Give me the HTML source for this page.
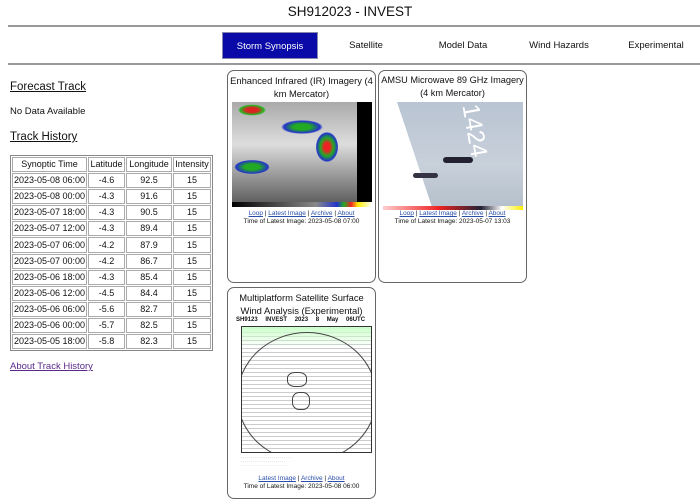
<!DOCTYPE html>
<html><head><style>
*{margin:0;padding:0;box-sizing:border-box}
body{width:700px;height:504px;background:#fff;font-family:"Liberation Sans",sans-serif;color:#111;position:relative;overflow:hidden}
.a{position:absolute}
.title{left:0;width:700px;top:4px;text-align:center;font-size:13.5px}
.hr{left:8px;width:692px;height:2px;background:#999}
.nav{top:32px;height:27px;font-size:9.5px;text-align:center;line-height:27px}
h2{position:absolute;font-size:11.5px;font-weight:normal;text-decoration:underline;left:10px}
table{position:absolute;left:10px;top:155px;width:201px;table-layout:fixed;border-collapse:separate;border-spacing:1px;border:1px solid #888;font-size:9px;white-space:nowrap}
td{border:1px solid #aaa;height:15.1px;text-align:center;padding:0;line-height:13px;overflow:hidden}
.card{position:absolute;border:1px solid #666;border-radius:7px;background:#fff}
.ct{font-size:9.4px;text-align:center;line-height:13px;position:absolute;left:0;right:0}
.lk{font-size:6.5px;text-align:center;position:absolute;left:0;right:0;line-height:9px}
.lk span{color:#2a4fa8;text-decoration:underline}
</style></head><body>
<div class="a title">SH912023 - INVEST</div>
<div class="a hr" style="top:25px"></div>
<div class="a nav" style="left:222px;width:96px;background:#0a0aa8;color:#fff;border:1px solid #88a">Storm Synopsis</div>
<div class="a nav" style="left:330px;width:72px">Satellite</div>
<div class="a nav" style="left:425px;width:76px">Model Data</div>
<div class="a nav" style="left:520px;width:78px">Wind Hazards</div>
<div class="a nav" style="left:618px;width:76px">Experimental</div>
<div class="a hr" style="top:63px"></div>

<h2 style="top:81px">Forecast Track</h2>
<div class="a" style="left:10px;top:106px;font-size:9.5px">No Data Available</div>
<h2 style="top:131px">Track History</h2>
<table>
<colgroup><col style="width:75px"><col style="width:37px"><col style="width:46px"><col style="width:38px"></colgroup>
<tr><td>Synoptic Time</td><td>Latitude</td><td>Longitude</td><td>Intensity</td></tr>
<tr><td>2023-05-08 06:00</td><td>-4.6</td><td>92.5</td><td>15</td></tr>
<tr><td>2023-05-08 00:00</td><td>-4.3</td><td>91.6</td><td>15</td></tr>
<tr><td>2023-05-07 18:00</td><td>-4.3</td><td>90.5</td><td>15</td></tr>
<tr><td>2023-05-07 12:00</td><td>-4.3</td><td>89.4</td><td>15</td></tr>
<tr><td>2023-05-07 06:00</td><td>-4.2</td><td>87.9</td><td>15</td></tr>
<tr><td>2023-05-07 00:00</td><td>-4.2</td><td>86.7</td><td>15</td></tr>
<tr><td>2023-05-06 18:00</td><td>-4.3</td><td>85.4</td><td>15</td></tr>
<tr><td>2023-05-06 12:00</td><td>-4.5</td><td>84.4</td><td>15</td></tr>
<tr><td>2023-05-06 06:00</td><td>-5.6</td><td>82.7</td><td>15</td></tr>
<tr><td>2023-05-06 00:00</td><td>-5.7</td><td>82.5</td><td>15</td></tr>
<tr><td>2023-05-05 18:00</td><td>-5.8</td><td>82.3</td><td>15</td></tr>
</table>
<div class="a" style="left:10px;top:361px;font-size:9.5px;color:#5a2a8a;text-decoration:underline">About Track History</div>

<div class="card" style="left:227px;top:70px;width:149px;height:213px">
<div class="ct" style="top:3px">Enhanced Infrared (IR) Imagery (4 km Mercator)</div>
<div class="a" style="left:4px;top:31px;width:140px;height:105px;background:radial-gradient(ellipse 15px 20px at 95px 45px,#e22 20%,#2a2 45%,#23c 70%,transparent 75%),radial-gradient(ellipse 25px 10px at 20px 65px,#2a2 30%,#23c 65%,transparent 70%),radial-gradient(ellipse 20px 8px at 20px 8px,#d22 30%,#2b2 60%,transparent 70%),radial-gradient(ellipse 30px 10px at 70px 25px,#2a2 30%,#23c 60%,transparent 70%),linear-gradient(180deg,#aaa,#ddd 40%,#999 70%,#555);"></div>
<div class="a" style="left:129px;top:31px;width:15px;height:100px;background:#000"></div>
<div class="a" style="left:4px;top:131px;width:140px;height:5px;background:linear-gradient(90deg,#000,#888 60%,#23c 75%,#2a2 80%,#e22 85%,#fe0 90%,#fff)"></div>
<div class="lk" style="top:138px"><span>Loop</span> | <span>Latest Image</span> | <span>Archive</span> | <span>About</span></div>
<div class="lk" style="top:146px">Time of Latest Image: 2023-05-08 07:00</div>
</div>

<div class="card" style="left:378px;top:70px;width:149px;height:213px">
<div class="ct" style="top:3px;white-space:nowrap;font-size:9.2px">AMSU Microwave 89 GHz Imagery<br>(4 km Mercator)</div>
<div class="a" style="left:4px;top:31px;width:140px;height:105px;background:#fff;overflow:hidden">
<div class="a" style="left:14px;top:0;width:140px;height:105px;background:linear-gradient(180deg,#b9c4d2,#c8d0da 60%,#b5c0cc);clip-path:polygon(0 0,100% 0,100% 100%,25% 100%)"></div>
<div class="a" style="left:60px;top:55px;width:30px;height:6px;background:#223;border-radius:3px"></div>
<div class="a" style="left:30px;top:71px;width:25px;height:5px;background:#334;border-radius:3px"></div>
<div class="a" style="top:0;color:#fff;font-size:24px;transform:rotate(80deg);transform-origin:0 0;left:100px">1424</div>
</div>
<div class="a" style="left:4px;top:135px;width:140px;height:4px;background:linear-gradient(90deg,#fcc,#e22 40%,#223 70%,#fff 85%,#fe0)"></div>
<div class="lk" style="top:138px"><span>Loop</span> | <span>Latest Image</span> | <span>Archive</span> | <span>About</span></div>
<div class="lk" style="top:146px">Time of Latest Image: 2023-05-07 13:03</div>
</div>

<div class="card" style="left:227px;top:287px;width:149px;height:212px">
<div class="ct" style="top:3px">Multiplatform Satellite Surface Wind Analysis (Experimental)</div>
<div class="a" style="left:8px;top:29px;font-size:6px;font-weight:bold;width:135px;word-spacing:6px">SH9123 INVEST 2023 8 May 06UTC</div>
<div class="a" style="left:13px;top:38px;width:131px;height:127px;border:1px solid #333;overflow:hidden;background:repeating-linear-gradient(0deg,#fff 0 3px,#ccc 3px 4px)">
<div class="a" style="left:0;top:0;width:131px;height:20px;background:linear-gradient(180deg,#cfc,rgba(255,255,255,0))"></div>
<div class="a" style="left:-5px;top:5px;width:140px;height:130px;border:1.5px solid #444;border-radius:50%"></div>
<div class="a" style="left:45px;top:45px;width:20px;height:15px;border:1px solid #444;border-radius:40%"></div>
<div class="a" style="left:50px;top:65px;width:18px;height:18px;border:1px solid #444;border-radius:40%"></div>
</div>
<div class="a" style="left:13px;top:167px;width:131px;height:18px;font-size:3.5px;color:#666;line-height:4px;overflow:hidden;white-space:nowrap">. . . . . . . . . . . . . . . . . . . . . . . . . .<br>. . . . . . . . . . . . . . . . . . . . . . .<br>. . . . . . . . . . . . . . . . . . . . . . . .</div>
<div class="lk" style="top:186px"><span>Latest Image</span> | <span>Archive</span> | <span>About</span></div>
<div class="lk" style="top:194px">Time of Latest Image: 2023-05-08 06:00</div>
</div>
</body></html>
